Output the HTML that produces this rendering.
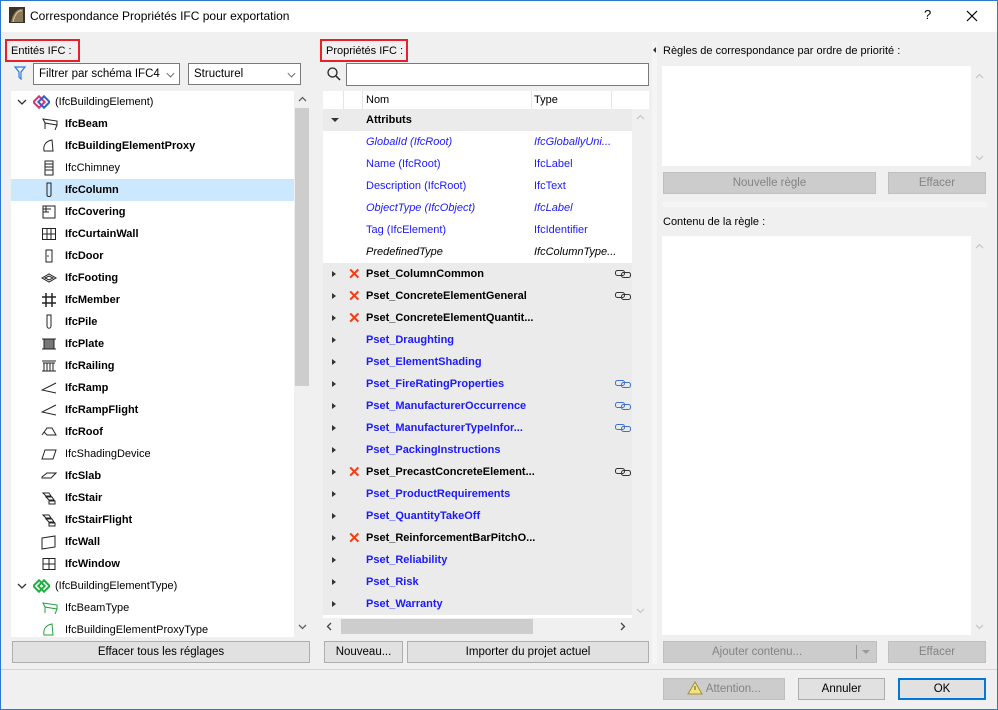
<!DOCTYPE html>
<html><head><meta charset="utf-8">
<style>
*{box-sizing:border-box;margin:0;padding:0}
body{width:998px;height:710px;overflow:hidden;background:#f0f0f0;font-family:"Liberation Sans",sans-serif;font-size:11px;color:#000;position:relative}
.a{position:absolute}
.win{position:absolute;left:0;top:0;width:998px;height:710px;border:1px solid #2b79d0;pointer-events:none}
.tb{left:0;top:0;width:998px;height:32px;background:#fff}
.btn{position:absolute;height:22px;border:1px solid #adadad;background:#e1e1e1;text-align:center;line-height:20px;font-size:11.5px}
.dis{color:#838383;background:#cccccc;border-color:#bfbfbf}
.combo{position:absolute;height:22px;border:1px solid #7a7a7a;background:#fff;line-height:20px;padding-left:5px;font-size:11.5px}
.chev{position:absolute;right:5px;top:6px;width:7px;height:7px;border-right:1px solid #555;border-bottom:1px solid #555;transform:rotate(45deg) scale(.8)}
.row{position:absolute;left:11px;width:283px;height:22px;line-height:23px}
.row .t{position:absolute;left:54px}
.row .i{position:absolute;left:30px;top:3px}
.b{font-weight:bold}
.pr{position:absolute;left:323px;width:309px;height:22px;line-height:23px}
.pr .n{position:absolute;left:43px}
.pr .ty{position:absolute;left:211px}
.g{background:#ebebeb}
.bl{color:#1a1aff}
.it{font-style:italic}
.tri{position:absolute;left:9px;top:8px;width:0;height:0;border-top:3.5px solid transparent;border-bottom:3.5px solid transparent;border-left:4px solid #333}
.x{position:absolute;left:25px;top:0;color:#f0401a;font-size:15px;font-weight:bold}
.lk{position:absolute;left:292px;top:7px}
.redbox{position:absolute;border:2px solid #e8202a}
.lbl{position:absolute;font-size:11px}
</style></head><body>
<div class="a tb"></div>
<svg class="a" style="left:9px;top:7px" width="16" height="16"><rect width="16" height="16" fill="#3a3328"/><path d="M2 15 C4 4,10 1,14 2 L14 15 Z" fill="#8a7a5a"/><path d="M4 15 C6 6,10 3,13 4" stroke="#d8c8a0" fill="none"/></svg>
<div class="a" style="left:30px;top:9px;font-size:12px">Correspondance Propriétés IFC pour exportation</div>
<div class="a" style="left:924px;top:7px;font-size:13px">?</div>
<svg class="a" style="left:966px;top:10px" width="12" height="12"><path d="M1 1L11 11M11 1L1 11" stroke="#000" stroke-width="1.2"/></svg>

<!-- LEFT -->
<div class="redbox" style="left:5px;top:39px;width:75px;height:23px"></div>
<div class="lbl" style="left:11px;top:45px">Entités IFC :</div>
<svg class="a" style="left:14px;top:66px" width="12" height="14"><path d="M1 1H11L7 6V13L5 11V6Z" fill="none" stroke="#2a7ae2" stroke-width="1.2"/></svg>
<div class="combo" style="left:33px;top:63px;width:147px">Filtrer par schéma IFC4<span class="chev"></span></div>
<div class="combo" style="left:188px;top:63px;width:113px">Structurel<span class="chev"></span></div>
<div class="a" style="left:11px;top:91px;width:299px;height:546px;background:#fff"></div>
<div class="a" style="left:294px;top:91px;width:16px;height:546px;background:#f0f0f0"></div>
<div class="a" style="left:295px;top:108px;width:14px;height:278px;background:#cdcdcd"></div>
<svg class="a" style="left:298px;top:96px" width="9" height="6"><path d="M1 5L4.5 1.5L8 5" stroke="#606060" fill="none" stroke-width="1.3"/></svg>
<svg class="a" style="left:298px;top:624px" width="9" height="6"><path d="M1 1L4.5 4.5L8 1" stroke="#606060" fill="none" stroke-width="1.3"/></svg>
<div class="a" style="left:11px;top:179px;width:283px;height:22px;background:#cce8ff"></div>

<div class="row" style="top:91px"><svg class="a" style="left:6px;top:8px" width="10" height="6"><path d="M1 1L5 5L9 1" stroke="#333" fill="none" stroke-width="1.3"/></svg><svg class="a" style="left:22px;top:3px" width="17" height="16"><rect x="2" y="4" width="8" height="8" transform="rotate(45 6 8)" fill="none" stroke="#e03070" stroke-width="2"/><rect x="7" y="4" width="8" height="8" transform="rotate(45 11 8)" fill="none" stroke="#3060d0" stroke-width="2"/></svg><span class="t" style="left:44px">(IfcBuildingElement)</span></div>
<div class="row b" style="top:113px"><svg class="i" width="18" height="16"><path d="M2 3L16 5V9L4 7ZM4 7V13M16 9L14 14" stroke="#222" fill="none"/></svg><span class="t">IfcBeam</span></div>
<div class="row b" style="top:135px"><svg class="i" width="16" height="16"><path d="M3 13C2 7,5 3,11 2L12 13Z M3 13H12" stroke="#222" fill="none"/></svg><span class="t">IfcBuildingElementProxy</span></div>
<div class="row" style="top:157px"><svg class="i" width="16" height="16"><rect x="4" y="1" width="8" height="14" fill="none" stroke="#222"/><path d="M4 4H12M4 7H12M4 10H12" stroke="#222"/></svg><span class="t">IfcChimney</span></div>
<div class="row b" style="top:179px"><svg class="i" width="16" height="16"><path d="M6 1H10V13C10 15,6 15,6 13Z" stroke="#222" fill="none"/></svg><span class="t">IfcColumn</span></div>
<div class="row b" style="top:201px"><svg class="i" width="16" height="16"><rect x="2" y="2" width="12" height="12" fill="none" stroke="#222"/><path d="M2 5H10M2 8H8M5 2V8" stroke="#222"/></svg><span class="t">IfcCovering</span></div>
<div class="row b" style="top:223px"><svg class="i" width="16" height="16"><rect x="1.5" y="2.5" width="13" height="11" fill="none" stroke="#222"/><path d="M1 8H15M6 2V14M10 2V14" stroke="#222"/></svg><span class="t">IfcCurtainWall</span></div>
<div class="row b" style="top:245px"><svg class="i" width="16" height="16"><path d="M5 2H11V14H5Z" stroke="#222" fill="none"/><circle cx="7" cy="8" r=".8" fill="#222"/></svg><span class="t">IfcDoor</span></div>
<div class="row b" style="top:267px"><svg class="i" width="16" height="16"><path d="M1 8L8 4L15 8L8 12ZM4 8L8 6L12 8L8 10Z" stroke="#222" fill="none"/></svg><span class="t">IfcFooting</span></div>
<div class="row b" style="top:289px"><svg class="i" width="16" height="16"><path d="M5 1V15M11 1V15M1 5H15M1 11H15" stroke="#222" stroke-width="1.5"/></svg><span class="t">IfcMember</span></div>
<div class="row b" style="top:311px"><svg class="i" width="16" height="16"><path d="M6 1H10V12C10 15,6 15,6 12Z" stroke="#222" fill="none"/></svg><span class="t">IfcPile</span></div>
<div class="row b" style="top:333px"><svg class="i" width="16" height="16"><rect x="3" y="3" width="10" height="10" fill="#777" stroke="#222"/><path d="M1 3H15M1 13H15" stroke="#222"/></svg><span class="t">IfcPlate</span></div>
<div class="row b" style="top:355px"><svg class="i" width="16" height="16"><path d="M1 3H15M2 5H14M3 5V13M6 5V13M9 5V13M12 5V13M1 13H15" stroke="#222"/></svg><span class="t">IfcRailing</span></div>
<div class="row b" style="top:377px"><svg class="i" width="16" height="16"><path d="M15 3L1 10L15 13" stroke="#222" fill="none"/></svg><span class="t">IfcRamp</span></div>
<div class="row b" style="top:399px"><svg class="i" width="16" height="16"><path d="M15 3L1 10L15 13" stroke="#222" fill="none"/></svg><span class="t">IfcRampFlight</span></div>
<div class="row b" style="top:421px"><svg class="i" width="16" height="16"><path d="M1 11L6 4H11L15 11H6L3 8" stroke="#222" fill="none"/></svg><span class="t">IfcRoof</span></div>
<div class="row" style="top:443px"><svg class="i" width="16" height="16"><path d="M1 13L4 4H15L12 13Z" stroke="#222" fill="none"/></svg><span class="t">IfcShadingDevice</span></div>
<div class="row b" style="top:465px"><svg class="i" width="16" height="16"><path d="M1 9L6 5H15L10 10H1Z" stroke="#222" fill="none"/></svg><span class="t">IfcSlab</span></div>
<div class="row b" style="top:487px"><svg class="i" width="16" height="16"><path d="M2 3H8L10 6H5ZM5 7H11L13 10H8ZM8 11H14V14H8Z" stroke="#222" fill="none"/></svg><span class="t">IfcStair</span></div>
<div class="row b" style="top:509px"><svg class="i" width="16" height="16"><path d="M2 3H8L10 6H5ZM5 7H11L13 10H8ZM8 11H14V14H8Z" stroke="#222" fill="none"/></svg><span class="t">IfcStairFlight</span></div>
<div class="row b" style="top:531px"><svg class="i" width="16" height="16"><path d="M1 4L14 2V13L1 15Z" stroke="#222" fill="none"/></svg><span class="t">IfcWall</span></div>
<div class="row b" style="top:553px"><svg class="i" width="16" height="16"><rect x="2" y="2.5" width="12" height="11" fill="none" stroke="#222"/><path d="M8 2V14M2 8H14" stroke="#222"/></svg><span class="t">IfcWindow</span></div>
<div class="row" style="top:575px"><svg class="a" style="left:6px;top:8px" width="10" height="6"><path d="M1 1L5 5L9 1" stroke="#333" fill="none" stroke-width="1.3"/></svg><svg class="a" style="left:22px;top:3px" width="17" height="16"><rect x="2" y="4" width="8" height="8" transform="rotate(45 6 8)" fill="none" stroke="#20b040" stroke-width="2"/><rect x="7" y="4" width="8" height="8" transform="rotate(45 11 8)" fill="none" stroke="#20b040" stroke-width="2"/></svg><span class="t" style="left:44px">(IfcBuildingElementType)</span></div>
<div class="row" style="top:597px"><svg class="i" width="18" height="16"><path d="M2 3L16 5V9L4 7ZM4 7V13M16 9L14 14" stroke="#20a040" fill="none"/></svg><span class="t">IfcBeamType</span></div>
<div class="row" style="top:619px;height:18px;overflow:hidden"><svg class="i" width="16" height="16"><path d="M3 13C2 7,5 3,11 2L12 13Z" stroke="#20a040" fill="none"/></svg><span class="t">IfcBuildingElementProxyType</span></div>
<div class="btn" style="left:12px;top:641px;width:298px">Effacer tous les réglages</div>

<!-- MIDDLE -->
<div class="redbox" style="left:320px;top:39px;width:88px;height:23px"></div>
<div class="lbl" style="left:326px;top:45px">Propriétés IFC :</div>
<svg class="a" style="left:326px;top:66px" width="16" height="16"><circle cx="6.5" cy="6.5" r="4.5" stroke="#222" fill="none" stroke-width="1.3"/><path d="M10 10L14 14" stroke="#222" stroke-width="1.5"/></svg>
<div class="a" style="left:346px;top:63px;width:303px;height:23px;border:1px solid #7a7a7a;background:#fff"></div>
<div class="a" style="left:323px;top:91px;width:326px;height:544px;background:#fff"></div>
<div class="a" style="left:632px;top:109px;width:17px;height:509px;background:#f0f0f0"></div>
<svg class="a" style="left:636px;top:114px" width="9" height="6"><path d="M1 5L4.5 1.5L8 5" stroke="#c8c8c8" fill="none" stroke-width="1.3"/></svg>
<svg class="a" style="left:636px;top:608px" width="9" height="6"><path d="M1 1L4.5 4.5L8 1" stroke="#c8c8c8" fill="none" stroke-width="1.3"/></svg>
<div class="a" style="left:323px;top:618px;width:326px;height:17px;background:#f0f0f0"></div>
<div class="a" style="left:341px;top:619px;width:192px;height:15px;background:#cdcdcd"></div>
<svg class="a" style="left:326px;top:622px" width="6" height="9"><path d="M5 1L1.5 4.5L5 8" stroke="#444" fill="none" stroke-width="1.3"/></svg>
<svg class="a" style="left:620px;top:622px" width="6" height="9"><path d="M1 1L4.5 4.5L1 8" stroke="#444" fill="none" stroke-width="1.3"/></svg>
<div class="a" style="left:343px;top:91px;width:1px;height:18px;background:#e5e5e5"></div>
<div class="a" style="left:362px;top:91px;width:1px;height:18px;background:#e5e5e5"></div>
<div class="a" style="left:531px;top:91px;width:1px;height:18px;background:#e5e5e5"></div>
<div class="a" style="left:611px;top:91px;width:1px;height:18px;background:#e5e5e5"></div>
<div class="a" style="left:366px;top:94px">Nom</div>
<div class="a" style="left:534px;top:94px">Type</div>

<div class="pr g b" style="top:109px"><svg class="a" style="left:8px;top:9px" width="8" height="5"><path d="M0 0H8L4 4Z" fill="#333"/></svg><span class="n">Attributs</span></div>
<div class="pr bl it" style="top:131px"><span class="n">GlobalId (IfcRoot)</span><span class="ty">IfcGloballyUni...</span></div>
<div class="pr bl" style="top:153px"><span class="n">Name (IfcRoot)</span><span class="ty">IfcLabel</span></div>
<div class="pr bl" style="top:175px"><span class="n">Description (IfcRoot)</span><span class="ty">IfcText</span></div>
<div class="pr bl it" style="top:197px"><span class="n">ObjectType (IfcObject)</span><span class="ty">IfcLabel</span></div>
<div class="pr bl" style="top:219px"><span class="n">Tag (IfcElement)</span><span class="ty">IfcIdentifier</span></div>
<div class="pr it" style="top:241px"><span class="n">PredefinedType</span><span class="ty">IfcColumnType...</span></div>

<div class="pr g b" style="top:263px"><span class="tri"></span><span class="x">✕</span><span class="n">Pset_ColumnCommon</span><svg class="lk" width="16" height="8"><rect x="0.5" y="0.5" width="9" height="5" rx="2" fill="none" stroke="#333"/><rect x="6.5" y="2.5" width="9" height="5" rx="2" fill="none" stroke="#333"/></svg></div>
<div class="pr g b" style="top:285px"><span class="tri"></span><span class="x">✕</span><span class="n">Pset_ConcreteElementGeneral</span><svg class="lk" width="16" height="8"><rect x="0.5" y="0.5" width="9" height="5" rx="2" fill="none" stroke="#333"/><rect x="6.5" y="2.5" width="9" height="5" rx="2" fill="none" stroke="#333"/></svg></div>
<div class="pr g b" style="top:307px"><span class="tri"></span><span class="x">✕</span><span class="n">Pset_ConcreteElementQuantit...</span></div>
<div class="pr g b bl" style="top:329px"><span class="tri"></span><span class="n">Pset_Draughting</span></div>
<div class="pr g b bl" style="top:351px"><span class="tri"></span><span class="n">Pset_ElementShading</span></div>
<div class="pr g b bl" style="top:373px"><span class="tri"></span><span class="n">Pset_FireRatingProperties</span><svg class="lk" width="16" height="8"><rect x="0.5" y="0.5" width="9" height="5" rx="2" fill="none" stroke="#4070d0"/><rect x="6.5" y="2.5" width="9" height="5" rx="2" fill="none" stroke="#4070d0"/></svg></div>
<div class="pr g b bl" style="top:395px"><span class="tri"></span><span class="n">Pset_ManufacturerOccurrence</span><svg class="lk" width="16" height="8"><rect x="0.5" y="0.5" width="9" height="5" rx="2" fill="none" stroke="#4070d0"/><rect x="6.5" y="2.5" width="9" height="5" rx="2" fill="none" stroke="#4070d0"/></svg></div>
<div class="pr g b bl" style="top:417px"><span class="tri"></span><span class="n">Pset_ManufacturerTypeInfor...</span><svg class="lk" width="16" height="8"><rect x="0.5" y="0.5" width="9" height="5" rx="2" fill="none" stroke="#4070d0"/><rect x="6.5" y="2.5" width="9" height="5" rx="2" fill="none" stroke="#4070d0"/></svg></div>
<div class="pr g b bl" style="top:439px"><span class="tri"></span><span class="n">Pset_PackingInstructions</span></div>
<div class="pr g b" style="top:461px"><span class="tri"></span><span class="x">✕</span><span class="n">Pset_PrecastConcreteElement...</span><svg class="lk" width="16" height="8"><rect x="0.5" y="0.5" width="9" height="5" rx="2" fill="none" stroke="#333"/><rect x="6.5" y="2.5" width="9" height="5" rx="2" fill="none" stroke="#333"/></svg></div>
<div class="pr g b bl" style="top:483px"><span class="tri"></span><span class="n">Pset_ProductRequirements</span></div>
<div class="pr g b bl" style="top:505px"><span class="tri"></span><span class="n">Pset_QuantityTakeOff</span></div>
<div class="pr g b" style="top:527px"><span class="tri"></span><span class="x">✕</span><span class="n">Pset_ReinforcementBarPitchO...</span></div>
<div class="pr g b bl" style="top:549px"><span class="tri"></span><span class="n">Pset_Reliability</span></div>
<div class="pr g b bl" style="top:571px"><span class="tri"></span><span class="n">Pset_Risk</span></div>
<div class="pr g b bl" style="top:593px"><span class="tri"></span><span class="n">Pset_Warranty</span></div>

<div class="btn" style="left:324px;top:641px;width:79px">Nouveau...</div>
<div class="btn" style="left:407px;top:641px;width:242px">Importer du projet actuel</div>

<!-- RIGHT -->
<div class="a" style="left:652px;top:42px;width:5px;height:622px;background:#f5f5f5"></div>
<div class="a" style="left:653px;top:47px;width:0;height:0;border-top:3px solid transparent;border-bottom:3px solid transparent;border-right:3px solid #333"></div>
<div class="lbl" style="left:663px;top:45px">Règles de correspondance par ordre de priorité :</div>
<div class="a" style="left:662px;top:66px;width:309px;height:100px;background:#fff"></div>
<svg class="a" style="left:975px;top:73px" width="9" height="6"><path d="M1 5L4.5 1.5L8 5" stroke="#c8c8c8" fill="none" stroke-width="1.3"/></svg>
<svg class="a" style="left:975px;top:155px" width="9" height="6"><path d="M1 1L4.5 4.5L8 1" stroke="#c8c8c8" fill="none" stroke-width="1.3"/></svg>
<div class="btn dis" style="left:663px;top:172px;width:213px">Nouvelle règle</div>
<div class="btn dis" style="left:888px;top:172px;width:98px">Effacer</div>
<div class="a" style="left:662px;top:202px;width:325px;height:5px;background:#f5f5f5"></div>
<div class="lbl" style="left:663px;top:216px">Contenu de la règle :</div>
<div class="a" style="left:662px;top:236px;width:309px;height:399px;background:#fff"></div>
<svg class="a" style="left:975px;top:243px" width="9" height="6"><path d="M1 5L4.5 1.5L8 5" stroke="#c8c8c8" fill="none" stroke-width="1.3"/></svg>
<svg class="a" style="left:975px;top:624px" width="9" height="6"><path d="M1 1L4.5 4.5L8 1" stroke="#c8c8c8" fill="none" stroke-width="1.3"/></svg>
<div class="btn dis" style="left:663px;top:641px;width:214px;text-align:left;padding-left:48px">Ajouter contenu...<span class="a" style="left:192px;top:3px;width:1px;height:14px;background:#999"></span><span class="a" style="left:198px;top:8px;width:0;height:0;border-left:4px solid transparent;border-right:4px solid transparent;border-top:4px solid #999"></span></div>
<div class="btn dis" style="left:888px;top:641px;width:98px">Effacer</div>

<!-- BOTTOM -->
<div class="a" style="left:0;top:669px;width:998px;height:1px;background:#d5d5d5"></div>
<div class="btn dis" style="left:663px;top:678px;width:122px"><svg style="vertical-align:-3px" width="16" height="14"><path d="M8 1L15 13H1Z" fill="#f6e27a" stroke="#a09040"/><path d="M8 5V9" stroke="#555"/></svg> Attention...</div>
<div class="btn" style="left:798px;top:678px;width:87px">Annuler</div>
<div class="btn" style="left:898px;top:678px;width:88px;border:2px solid #0078d7;line-height:18px">OK</div>
<div class="win"></div>
</body></html>
